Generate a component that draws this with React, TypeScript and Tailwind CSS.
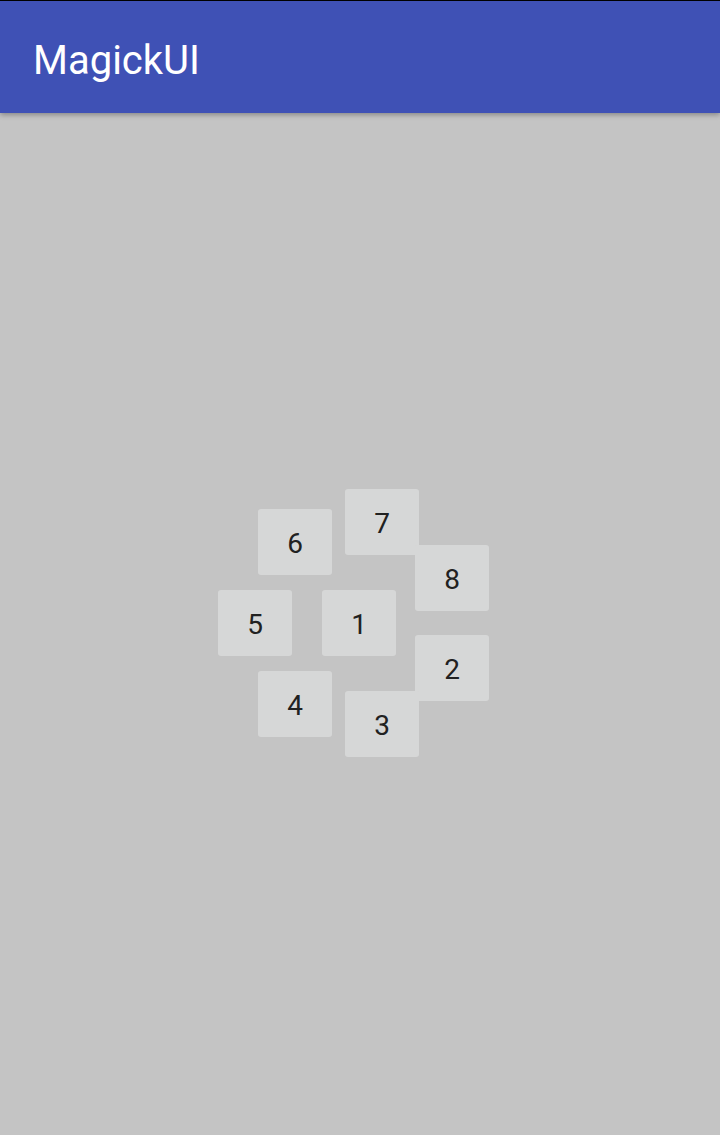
const tiles = [
  { n: '1', x: 0, y: 0 },
  { n: '2', x: 93, y: 45 },
  { n: '3', x: 23, y: 101 },
  { n: '4', x: -64, y: 81 },
  { n: '5', x: -104, y: 0 },
  { n: '6', x: -64, y: -81 },
  { n: '7', x: 23, y: -101 },
  { n: '8', x: 93, y: -45 },
];

export default function App() {
  return (
    <div
      className="h-screen flex flex-col bg-[#c4c4c4]"
      style={{ fontFamily: 'Roboto, "Noto Sans", sans-serif' }}
    >
      <header className="relative z-10 h-[113px] shrink-0 border-t border-black bg-[#3f51b5] flex items-center px-[33px] shadow-[0_2px_5px_rgba(0,0,0,0.3)]">
        <h1 className="text-white text-[40px] leading-none mt-[7px]">MagickUI</h1>
      </header>
      <main className="flex-1 flex items-center justify-center">
        {/* tiles laid out around tile 1, offsets measured from its top-left */}
        <div className="relative w-[74px] h-[66px] mr-[2px] mb-[2px]">
          {tiles.map((t) => (
            <button
              key={t.n}
              className="absolute w-[74px] h-[66px] pt-[3px] rounded-[3px] bg-[#d6d7d7] text-[#212121] text-[28px] flex items-center justify-center"
              style={{ left: t.x, top: t.y }}
            >
              {t.n}
            </button>
          ))}
        </div>
      </main>
    </div>
  );
}
